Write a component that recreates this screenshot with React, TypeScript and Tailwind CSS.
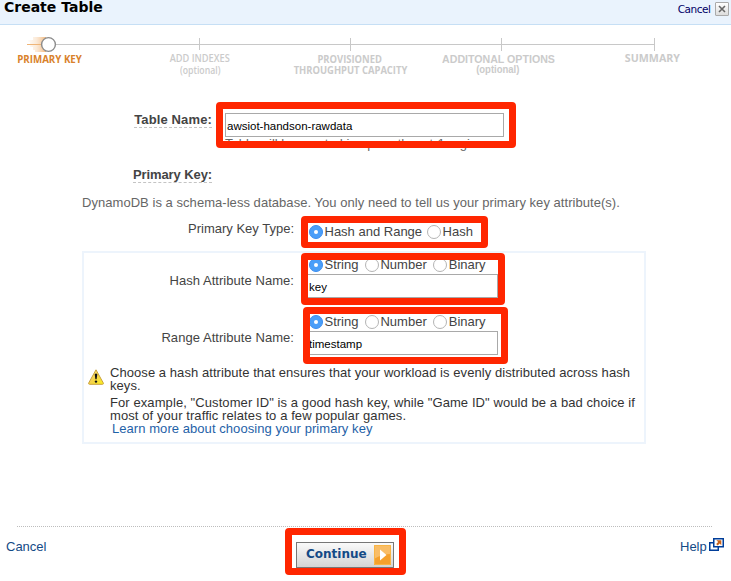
import React from "react";

function Radio({ label, on = false }: { label: string; on?: boolean }) {
  return (
    <span className="flex h-[14px] items-start gap-[1.5px]">
      <span
        className={
          on
            ? "flex size-[14px] items-center justify-center rounded-full border border-[#3a8df0] bg-[#4a9ef8]"
            : "size-[14px] rounded-full border border-[#b4b4b4] bg-white"
        }
      >
        {on && <span className="size-[4px] rounded-full bg-white" />}
      </span>
      <span className="leading-[13px]">{label}</span>
    </span>
  );
}

function TextField({ value, className }: { value: string; className: string }) {
  return (
    <div
      className={
        "flex h-[24px] items-center border border-[#a9a9a9] bg-white pt-[2px] pl-[1px] text-[11.5px] leading-[12px] text-black " +
        className
      }
    >
      {value}
    </div>
  );
}

function AttributeRow({ label, value, className }: { label: string; value: string; className: string }) {
  return (
    <div className={"flex " + className}>
      <div className="w-[210px] pt-[21px] text-right leading-[13px] tracking-[0.05px]">{label}</div>
      <div className="ml-[13px] pt-[5px]">
        <div className="ml-[2px] flex gap-[6.5px]">
          <Radio label="String" on />
          <Radio label="Number" />
          <Radio label="Binary" />
        </div>
        <TextField value={value} className="mt-[2px] w-[191px]" />
      </div>
    </div>
  );
}

function Highlight({ className }: { className: string }) {
  return <div className={"absolute rounded-[4px] border-[#ff2600] " + className} />;
}

function Track() {
  return (
    <svg width="731" height="28" viewBox="0 25 731 28" className="block shrink-0" fill="none">
      <defs>
        <linearGradient id="trail" x1="27" x2="46" y1="0" y2="0" gradientUnits="userSpaceOnUse">
          <stop offset="0" stopColor="#f6cfa6" stopOpacity="0" />
          <stop offset="0.5" stopColor="#f6cfa6" stopOpacity="0.45" />
          <stop offset="1" stopColor="#efb070" stopOpacity="0.9" />
        </linearGradient>
      </defs>
      <path d="M56 44.5H655" stroke="#c8c8c8" />
      <path d="M199.500 38v12M350.500 38v13M501.500 38v13M654.500 38v13" stroke="#c8c8c8" />
      <path d="M33 37h13v15H35v-2h-2v-3h-3v-5h-2v-2h5z" fill="url(#trail)" />
      <path d="M27 44.500H42" stroke="#efb578" />
      <circle cx="48.500" cy="44.500" r="6.900" fill="#fff" stroke="#8b8b8b" strokeWidth="1.400" />
    </svg>
  );
}

function WarningIcon() {
  return (
    <svg width="16" height="16" viewBox="0 0 16 16" className="block">
      <defs>
        <linearGradient id="warn" x1="0" x2="1" y1="0" y2="1">
          <stop offset="0" stopColor="#fff0a0" />
          <stop offset="0.5" stopColor="#f5d34a" />
          <stop offset="1" stopColor="#fbf21c" />
        </linearGradient>
      </defs>
      <path d="M8 .8 15.400 14.200Q15.600 15.300 14.500 15.300H1.500Q.4 15.300.6 14.200Z" fill="url(#warn)" stroke="#c9a13b" strokeWidth="1" strokeLinejoin="round" />
      <path d="M6.700 5.200Q8 4 9.300 5.200L8.600 10.300H7.400Z" fill="#111" />
      <circle cx="8" cy="12.600" r="1.200" fill="#111" />
    </svg>
  );
}

function ExternalIcon() {
  return (
    <svg width="15" height="13" viewBox="0 0 15 13" className="block" fill="none">
      <path d="M.75 4.750H9.250V12.250H.75Z" fill="#fff" stroke="#003d99" strokeWidth="1.500" />
      <path d="M4.750 .75H14.250V8.750H4.750Z" fill="#fff" stroke="#003d99" strokeWidth="1.500" />
      <path d="M7.300 2.200h5v5l-1.600-1.600-2.100 1.900-1.400-1.400 2-2z" fill="#cc6319" />
    </svg>
  );
}

export default function App() {
  return (
    <div className="relative flex h-[581px] w-[731px] flex-col overflow-hidden bg-white font-['Liberation_Sans',Arial,sans-serif] text-[13px] whitespace-nowrap text-[#444]">
      <header className="flex h-[25px] shrink-0 items-start justify-between border-b border-[#c6dff5] bg-[#eaf3fd] pr-[2px] pl-[4px] font-['DejaVu_Sans',Verdana,sans-serif]">
        <h1 className="text-[14px] leading-[14px] font-bold text-black">Create Table</h1>
        <div className="flex items-center gap-[4.5px] pt-[2px] text-[#000066]">
          <span className="text-[10.5px] leading-[14px] tracking-[-0.45px]">Cancel</span>
          <span className="flex size-[14px] items-center justify-center rounded-[1px] border border-[#aaa] bg-linear-to-b from-white to-[#ddd]">
            <svg width="8" height="8" viewBox="0 0 8 8">
              <path d="M1 1 7 7M7 1 1 7" stroke="#666" strokeWidth="1.600" />
            </svg>
          </span>
        </div>
      </header>

      <Track />
      <div className="flex h-[58px] shrink-0 font-['Open_Sans',sans-serif] text-[11px] leading-[11px] font-bold text-[#cbcbcb]">
        <div className="flex w-[100px] flex-col items-center">
          <span className="scale-x-[0.885] text-[#d9822b]">PRIMARY KEY</span>
        </div>
        <div className="-mt-px flex w-[200px] flex-col items-center font-semibold">
          <span className="scale-x-[0.84]">ADD INDEXES</span>
          <span className="mt-[2px] scale-x-[0.87] text-[10px] leading-[10px]">(optional)</span>
        </div>
        <div className="flex w-[100px] flex-col items-center">
          <span className="scale-x-[0.855]">PROVISIONED</span>
          <span className="scale-x-[0.855]">THROUGHPUT CAPACITY</span>
        </div>
        <div className="flex w-[196px] flex-col items-center pt-px font-['Liberation_Sans',Arial,sans-serif]">
          <span className="scale-x-[0.965]">ADDITONAL OPTIONS</span>
          <span className="scale-x-[0.95] text-[10px] leading-[10px]">(optional)</span>
        </div>
        <div className="-mt-px flex w-[112px] flex-col items-center">
          <span className="scale-x-[0.97]">SUMMARY</span>
        </div>
      </div>

      <div className="flex h-[55px] shrink-0">
        <div className="flex w-[212px] items-start justify-end font-bold">
          <span className="h-[17px] border-b border-dashed border-[#c4c4c4] leading-[17px] tracking-[0.13px]">Table Name:</span>
        </div>
        <div className="ml-[13px] pt-[2px]">
          <TextField value="awsiot-handson-rawdata" className="w-[279px]" />
          <div className="leading-[13px] text-[#666]">Table will be created in ap-northeast-1 region</div>
        </div>
      </div>

      <div className="flex h-[30px] w-[212px] shrink-0 items-start justify-end font-bold">
        <span className="h-[17px] border-b border-dashed border-[#c4c4c4] leading-[17px] tracking-[-0.1px]">Primary Key:</span>
      </div>

      <p className="h-[26px] shrink-0 pl-[82px] leading-[13px] tracking-[0.043px] text-[#666]">
        DynamoDB is a schema-less database. You only need to tell us your primary key attribute(s).
      </p>

      <div className="flex h-[29px] shrink-0">
        <div className="w-[294px] text-right leading-[13px]">Primary Key Type:</div>
        <div className="ml-[15px] flex gap-[5px] pt-[3px]">
          <Radio label="Hash and Range" on />
          <Radio label="Hash" />
        </div>
      </div>

      <section className="ml-[82px] flex h-[193px] w-[564px] shrink-0 flex-col border-2 border-[#edf4fc]">
        <AttributeRow label="Hash Attribute Name:" value="key" className="h-[57px]" />
        <AttributeRow label="Range Attribute Name:" value="timestamp" className="h-[56px]" />
        <div className="flex leading-[13px]">
          <div className="w-[26px] pt-[3px] pl-[4px]">
            <WarningIcon />
          </div>
          <div className="text-[#333]">
            <p className="tracking-[0.062px]">
              Choose a hash attribute that ensures that your workload is evenly distributed across hash
              <br />
              keys.
            </p>
            <p className="mt-[4px] tracking-[0.086px]">
              For example, "Customer ID" is a good hash key, while "Game ID" would be a bad choice if
              <br />
              most of your traffic relates to a few popular games.
            </p>
            <a className="ml-[2px] block tracking-[0.06px] text-[#1f62a8]">Learn more about choosing your primary key</a>
          </div>
        </div>
      </section>

      <footer className="mt-[82px] shrink-0">
        <svg width="695" height="1" className="ml-[17px] block">
          <path d="M0 .5H695" stroke="#bdbdbd" strokeDasharray="1 1" />
        </svg>
        <div className="flex items-start pl-[6px] text-[#144a86]">
          <span className="w-[290px] pt-[13px] leading-[13px]">Cancel</span>
          <button className="mt-[15px] flex h-[26px] w-[98px] items-center justify-between border border-[#777] bg-linear-to-b from-[#fafafa] to-[#d4d4d4] pr-[2px] pl-[9px] font-['DejaVu_Sans',Verdana,sans-serif] text-[12px] leading-[14px] font-bold">
            <span className="-mt-[2px]">Continue</span>
            <svg width="17" height="20" viewBox="0 0 17 20">
              <path d="M0 0H17V20H0Z" fill="#f5a02c" />
              <path d="M0 0H17V9Q8 9 0 14Z" fill="#f9bd66" />
              <path d="M.5 .5H16.500V19.500H.5Z" fill="none" stroke="#f9b545" />
              <path d="M6 4.500 12.500 10 6 15.500Z" fill="#fff" />
            </svg>
          </button>
          <div className="ml-[286px] flex gap-[2px] pt-[11px]">
            <span className="pt-[2px] leading-[13px]">Help</span>
            <ExternalIcon />
          </div>
        </div>
      </footer>

      <Highlight className="top-[102px] left-[216px] h-[46px] w-[300px] border-7" />
      <Highlight className="top-[216px] left-[301px] h-[32px] w-[187px] border-7 border-b-6" />
      <Highlight className="top-[253px] left-[301px] h-[52px] w-[204px] border-7" />
      <Highlight className="top-[307px] left-[303px] h-[57px] w-[205px] border-7" />
      <Highlight className="top-[528px] left-[285px] h-[47px] w-[121px] border-7" />
    </div>
  );
}
